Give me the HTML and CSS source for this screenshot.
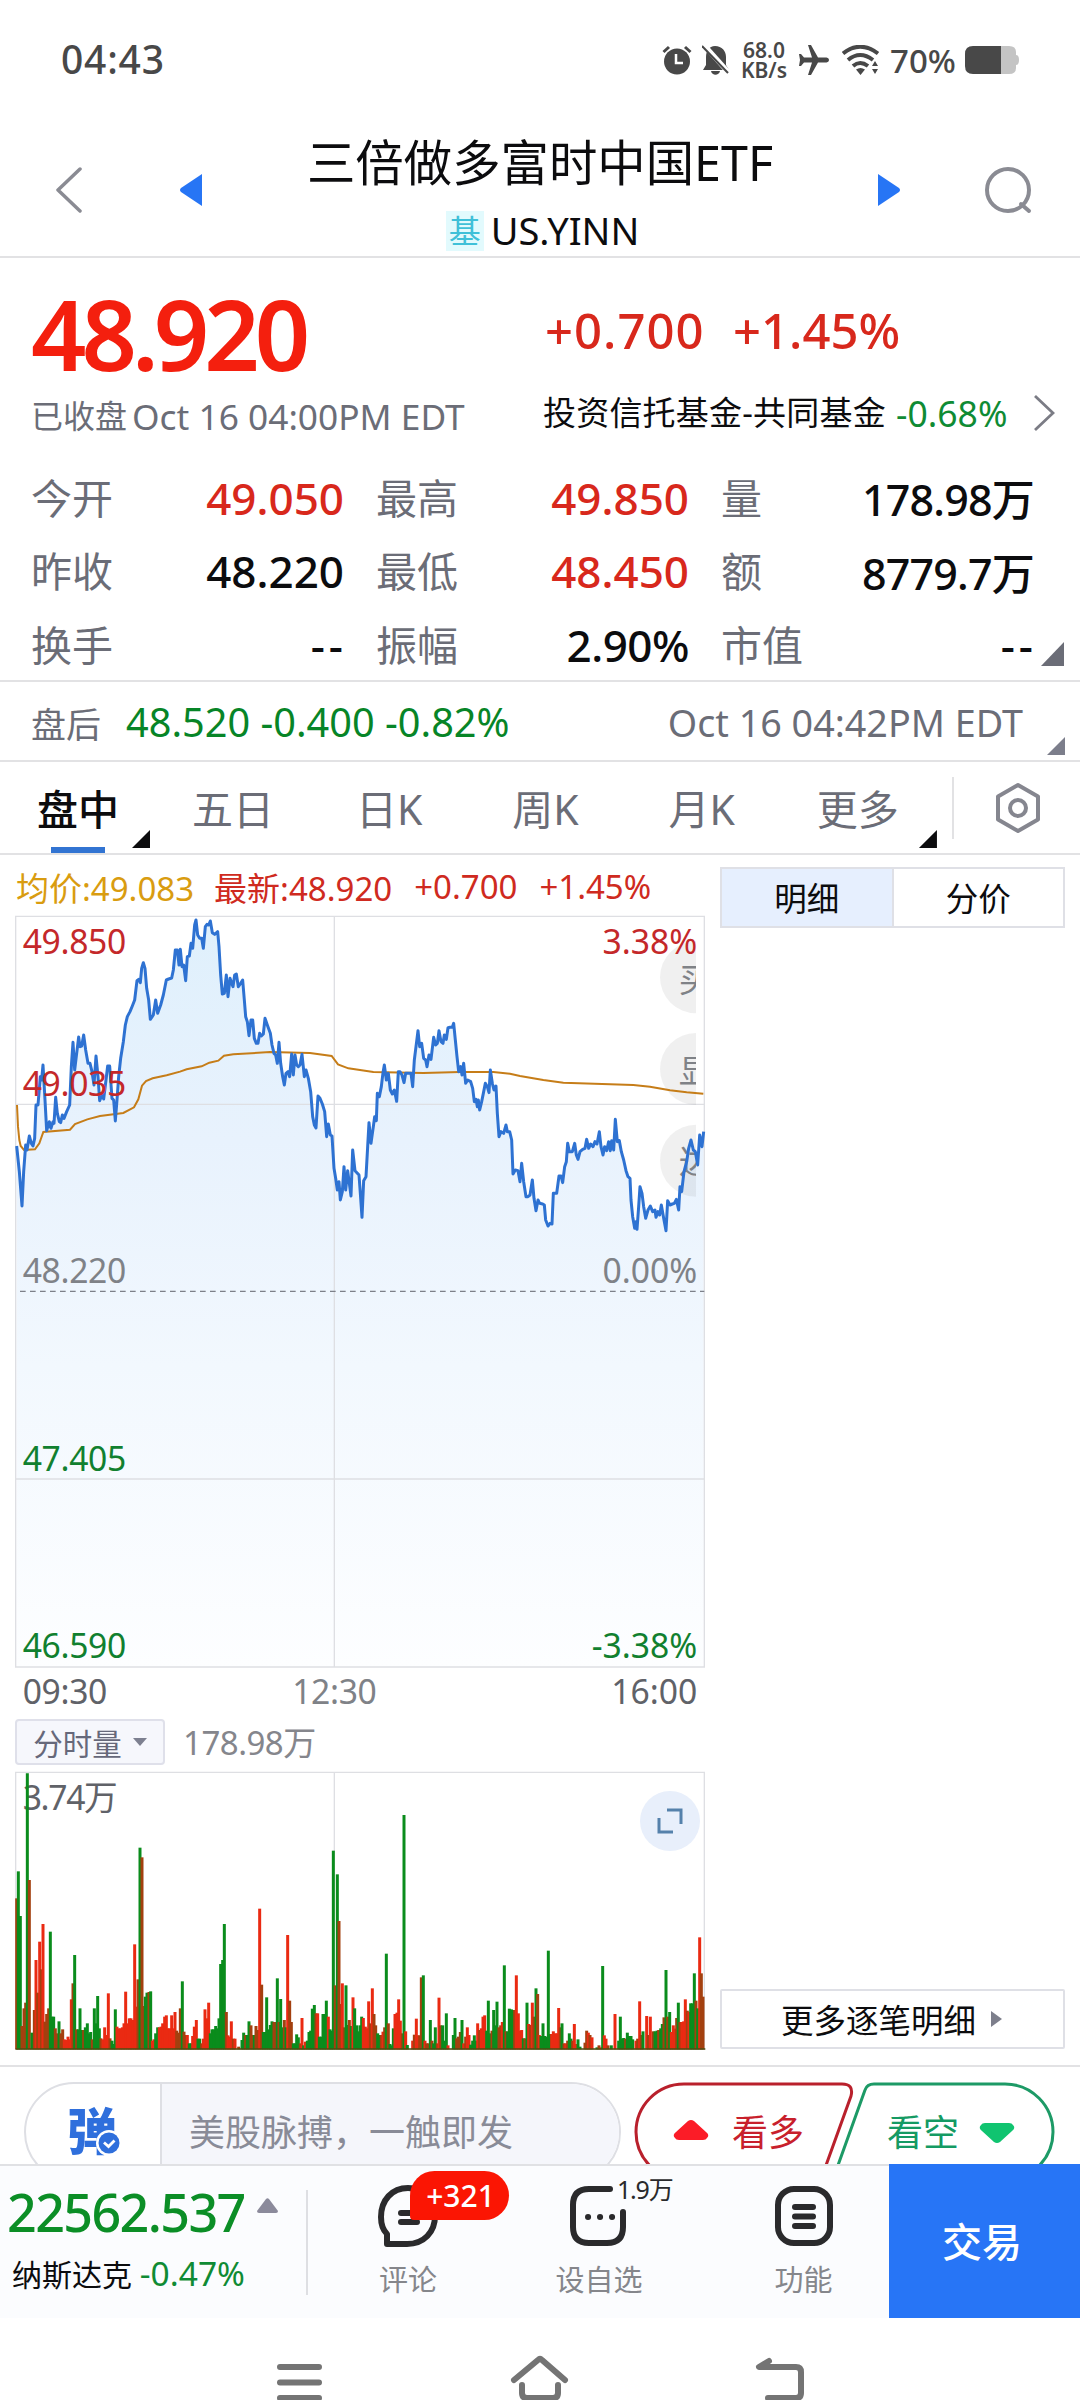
FILE: index.html
```html
<!DOCTYPE html>
<html lang="zh-CN">
<head>
    <meta charset="UTF-8">
    <meta name="viewport" content="width=device-width, initial-scale=1.0">
    <title>三倍做多富时中国ETF</title>
    <link rel="stylesheet" href="styles.css">
</head>
<body>
    <div class="status-bar">
        <span class="clock">04:43</span>
        <svg class="status-icon alarm" width="30" height="30" viewBox="0 0 30 30">
            <circle cx="15" cy="16.500" r="13" fill="#484848"/>
            <path d="M1.500 7L7 2M28.500 7L23 2" stroke="#484848" stroke-width="3" fill="none"/>
            <path d="M14 9v9h7" stroke="#fff" stroke-width="2.500" fill="none"/>
        </svg>
        <svg class="status-icon bell" width="28" height="30" viewBox="0 0 28 30">
            <path d="M13 1c7 0 11 5 11 11v8l3 5H1l3-5v-8C4 6 7 1 13 1zM9 26h9c-1 5-8 5-9 0z" fill="#484848"/>
            <path d="M2 0l25 28" stroke="#fff" stroke-width="5"/>
            <path d="M0 1l26 27" stroke="#484848" stroke-width="2"/>
        </svg>
        <div class="net-speed"><span>68.0</span><span>KB/s</span></div>
        <svg class="status-icon plane" width="30" height="32" viewBox="0 0 30 32">
            <path d="M30 16c0-2-2-2.500-4-2.500h-7L12 1H9l4 12.500H5L2 10H0l1 6-1 6h2l3-3.500h8L9 31h3l7-12.500h7c2 0 4-.5 4-2.500z" fill="#484848"/>
        </svg>
        <svg class="status-icon wifi" width="38" height="30" viewBox="0 0 38 30">
            <g fill="none" stroke="#484848" stroke-width="4">
                <path d="M1 8.500Q18 -5 36 8.500"/>
                <path d="M6 15Q18 5 31 15"/>
                <path d="M11 21Q18 15 26 21"/>
            </g>
            <path d="M14 24.500q4.500-3 9 0L18.500 30zM30 21l3-5 3 5zM30 24l3 5 3-5z" fill="#484848"/>
        </svg>
        <span class="battery-text">70%</span>
        <svg class="status-icon" width="54" height="28" viewBox="0 0 54 28">
            <path d="M36 0h8q7 0 7 6v3q3 0 3 5t-3 5v3q0 6-7 6h-8z" fill="#c4c4c4"/>
            <path d="M8 0h28v28H8q-8 0-8-8V8q0-8 8-8z" fill="#484848"/>
        </svg>
    </div>

    <div class="header">
        <svg class="back" width="26" height="46" viewBox="0 0 26 46"><path d="M24 2L2 23l22 21" fill="none" stroke="#8a8b93" stroke-width="3.500" stroke-linecap="round" stroke-linejoin="round"/></svg>
        <svg class="prev" width="22" height="32" viewBox="0 0 22 32"><path d="M22 0v32L1 18q-2-2 0-4z" fill="#2775f5"/></svg>
        <div class="title-box">
            <h1>三倍做多富时中国ETF</h1>
            <p><span class="fund-tag">基</span>US.YINN</p>
        </div>
        <svg class="next" width="22" height="32" viewBox="0 0 22 32"><path d="M0 0v32l21-14q2-2 0-4z" fill="#2775f5"/></svg>
        <svg class="search" width="48" height="48" viewBox="0 0 48 48"><circle cx="23" cy="24" r="21" fill="none" stroke="#8a8b93" stroke-width="4"/><path d="M36 38l8 7" stroke="#8a8b93" stroke-width="4" stroke-linecap="round"/></svg>
    </div>

    <div class="quote">
        <div class="price-row">
            <span class="price">48.920</span>
            <span class="change net">+0.700</span>
            <span class="change">+1.45%</span>
        </div>
        <div class="info-row">
            <span class="closed">已收盘</span>
            <span class="close-time">Oct 16 04:00PM EDT</span>
            <span class="sector">投资信托基金-共同基金</span>
            <span class="sector-pct">-0.68%</span>
            <svg width="22" height="38" viewBox="0 0 22 38"><path d="M2 2l18 17L2 36" fill="none" stroke="#7b7c85" stroke-width="2.800"/></svg>
        </div>
        <div class="stats">
            <div class="stat"><span>今开</span><b class="up">49.050</b></div>
            <div class="stat"><span>最高</span><b class="up">49.850</b></div>
            <div class="stat"><span>量</span><b class="sum">178.98万</b></div>
            <div class="stat"><span>昨收</span><b>48.220</b></div>
            <div class="stat"><span>最低</span><b class="up">48.450</b></div>
            <div class="stat"><span>额</span><b class="sum">8779.7万</b></div>
            <div class="stat"><span>换手</span><b class="dash">--</b></div>
            <div class="stat"><span>振幅</span><b class="amp">2.90%</b></div>
            <div class="stat"><span>市值</span><b class="dash">--</b></div>
        </div>
        <i class="corner quote-corner"></i>
    </div>

    <div class="after-hours">
        <span class="ah-label">盘后</span>
        <span class="ah-price">48.520 -0.400 -0.82%</span>
        <span class="ah-time">Oct 16 04:42PM EDT</span>
        <i class="corner ah-corner"></i>
    </div>

    <div class="tabs">
        <div class="tab active">盘中<i class="corner tab-corner"></i></div>
        <div class="tab">五日</div>
        <div class="tab">日K</div>
        <div class="tab">周K</div>
        <div class="tab">月K</div>
        <div class="tab more">更多<i class="corner tab-corner"></i></div>
        <div class="settings">
            <svg width="46" height="52" viewBox="0 0 46 52" fill="none" stroke="#85868f" stroke-width="4" stroke-linejoin="round"><path d="M23 3l20 11.500v23L23 49 3 37.500v-23z"/><circle cx="23" cy="26" r="8"/></svg>
        </div>
    </div>

    <div class="main">
        <div class="chart-col">
            <div class="chart-head">
                <span class="avg">均价:49.083</span>
                <span>最新:48.920</span>
                <span>+0.700</span>
                <span>+1.45%</span>
            </div>
            <svg class="price-chart" viewBox="45 45 2073 2400">
                <defs>
                    <linearGradient id="fill" gradientUnits="userSpaceOnUse" x1="0" y1="45" x2="0" y2="2300">
                        <stop offset="0" stop-color="#dff0fc"/>
                        <stop offset="0.300" stop-color="#e8f2fd"/>
                        <stop offset="0.600" stop-color="#f2f8fe"/>
                        <stop offset="1" stop-color="#fdfeff"/>
                    </linearGradient>
                    <clipPath id="sideClip"><rect x="1900" y="100" width="188" height="900"/></clipPath>
                </defs>
                <path id="priceArea" fill="url(#fill)"/>
                <path d="M47 49H2113V2301H47zM1003 49V2301M47 613H2113M47 1737H2113" fill="none" stroke="#dedfe3" stroke-width="4"/>
                <path d="M60 1174H2113" stroke="#7d8089" stroke-width="4" stroke-dasharray="17 13"/>
                <g clip-path="url(#sideClip)">
                    <g fill="#777" fill-opacity="0.110">
                        <circle cx="2088" cy="232" r="108"/>
                        <circle cx="2088" cy="507" r="108"/>
                        <circle cx="2088" cy="782" r="108"/>
                    </g>
                    <g class="side-text">
                        <text x="2036" y="275">买</text>
                        <text x="2036" y="550">显</text>
                        <text x="2036" y="823">达</text>
                    </g>
                </g>
                <path d="M51 615L54 680 58 720 62 738 72 750 105 748 118 730 130 696 210 689 225 672 262 658 300 648 370 639 402 622 415 598 426 557 438 543 458 535 500 526 540 515 560 508 605 499 628 488 655 482 672 467 700 463 810 456 930 459 995 468 1014 493 1045 505 1120 516 1270 519 1380 516 1480 516 1530 521 1560 528 1630 540 1690 548 1900 555 1950 560 2010 571 2060 577 2110 581" fill="none" stroke="#c67d18" stroke-width="6"/>
                <path id="priceLine" fill="none" stroke="#2e72d2" stroke-width="9" stroke-linejoin="round"/>
                <g class="axis">
                    <text x="68" y="162" class="red">49.850</text>
                    <text x="68" y="587" class="red">49.035</text>
                    <text x="68" y="1150">48.220</text>
                    <text x="68" y="1712" class="green">47.405</text>
                    <text x="68" y="2273" class="green">46.590</text>
                    <text x="2092" y="162" class="red end">3.38%</text>
                    <text x="2092" y="1150" class="end">0.00%</text>
                    <text x="2092" y="2273" class="green end">-3.38%</text>
                    <text x="68" y="2413" class="time">09:30</text>
                    <text x="1003" y="2413" class="middle">12:30</text>
                    <text x="2092" y="2413" class="time end">16:00</text>
                </g>
            </svg>
            <div class="volume-head">
                <button class="indicator">分时量<svg width="14" height="8" viewBox="0 0 14 8"><path d="M0 0h14L7 8z" fill="#7d8090"/></svg></button>
                <span>178.98万</span>
            </div>
            <div class="volume-box">
                <svg class="volume-chart" viewBox="45 453 2073 840">
                    <path d="M47 457H2113V1288H47zM1003 457V1288" fill="none" stroke="#dedfe3" stroke-width="4"/>
                    <text x="68" y="571">3.74万</text>
                    <g id="bars" stroke-width="9"></g>
                    <path d="M47 1287H2116" stroke="#4d4c10" stroke-width="4"/>
                </svg>
                <span class="expand">
                    <svg width="26" height="26" viewBox="0 0 26 26"><path d="M10 2h14v14M2 10v14h14" fill="none" stroke="#5581ab" stroke-width="3"/></svg>
                </span>
            </div>
        </div>
        <div class="detail-col">
            <div class="switch"><span class="on">明细</span><span>分价</span></div>
            <div class="more-detail">更多逐笔明细<svg width="11" height="16" viewBox="0 0 11 16"><path d="M0 0l11 8-11 8z" fill="#7d7f8c"/></svg></div>
        </div>
    </div>

    <div class="promo">
        <div class="pulse">
            <div class="pulse-logo"><span>弹</span>
                <svg width="26" height="26" viewBox="0 0 26 26"><circle cx="13" cy="13" r="13" fill="#fff"/><circle cx="13" cy="13" r="10.500" fill="#2f6fdc"/><path d="M8 12.500l4.500 4 6-6" fill="none" stroke="#fff" stroke-width="2.800"/></svg>
            </div>
            <div class="pulse-text">美股脉搏，一触即发</div>
        </div>
        <svg class="vote" width="422" height="82" viewBox="0 0 422 82">
            <path d="M186 100L217 14Q220 2 208 2H50C23 2 2 24 2 50S23 98 50 98" fill="#fff" stroke="#b9202c" stroke-width="3"/>
            <path d="M198 100L231 8Q233 2 240 2H371C398 2 419 24 419 50S398 98 371 98" fill="#fff" stroke="#1d9a66" stroke-width="3"/>
            <path d="M41 56q-3-3 1-6l12-11q3-2 6 0l12 11q4 3 1 6-1 2-4 2H45q-3 0-4-2z" fill="#fb1c27"/>
            <path d="M347 43q-3 3 1 6l12 11q3 2 6 0l12-11q4-3 1-6-1-2-4-2h-24q-3 0-4 2z" fill="#10c470"/>
            <text x="98" y="64" fill="#c8202c">看多</text>
            <text x="253" y="64" fill="#159a63">看空</text>
        </svg>
    </div>

    <div class="bottom-bar">
        <div class="index">
            <div class="index-value">22562.537<svg width="21" height="15" viewBox="0 0 21 15"><path d="M9 1q1.500-1.500 3 0l9 12q0 2-2 2H2q-2 0-2-2z" fill="#8b8a9b"/></svg></div>
            <div class="index-name">纳斯达克 <span>-0.47%</span></div>
        </div>
        <div class="action comment">
            <svg width="60" height="64" viewBox="0 0 60 64" fill="none" stroke="#2a2a2c" stroke-width="6" stroke-linecap="round" stroke-linejoin="round"><path d="M9 60V50C5 46 3 40 3 33 3 16 14 4 30 4s27 12 27 28-11 28-28 28z"/><path d="M23 29h16M23 38h16"/></svg>
            <span>评论</span>
            <em class="badge">+321</em>
        </div>
        <div class="action watch">
            <svg width="60" height="64" viewBox="0 0 60 64" fill="none" stroke="#2a2a2c" stroke-width="6" stroke-linecap="round"><path d="M41 5H20Q4 5 4 21v22q0 16 16 16h18q16 0 16-16V28"/><path d="M19 33h.1M31 33h.1M43 33h.1"/></svg>
            <span>设自选</span>
            <em class="count">1.9万</em>
        </div>
        <div class="action func">
            <svg width="60" height="64" viewBox="0 0 60 64" fill="none" stroke="#2a2a2c" stroke-width="6" stroke-linecap="round"><rect x="4" y="5" width="52" height="54" rx="16"/><path d="M21 23h18M21 32.500h18M21 42h18"/></svg>
            <span>功能</span>
        </div>
        <div class="trade">交易</div>
    </div>

    <div class="nav-bar">
        <svg width="540" height="48" viewBox="0 0 540 48" fill="none" stroke="#747474" stroke-width="6" stroke-linecap="round" stroke-linejoin="round">
            <path d="M10 14h39M10 29.500h39M10 45h39"/>
            <path d="M244 27l24-20q2-2 4 0L295 27M252 32v8q0 5 5 5h26q5 0 5-5v-8"/>
            <path d="M499 8l-10 6h37q5 0 5 5v21q0 5-5 5h-28"/>
        </svg>
    </div>

    <script src="chart.js"></script>
</body>
</html>
```

FILE: styles.css
```css
* {
    box-sizing: border-box;
}
body {
    margin: 0;
    width: 1080px;
    height: 2400px;
    overflow: hidden;
    background: #fff;
    color: #0c0c0e;
    font-family: "Noto Sans", "Noto Sans CJK SC", sans-serif;
    white-space: nowrap;
}
svg {
    display: block;
    flex: none;
}
i, em {
    font-style: normal;
}

/* status bar */
.status-bar {
    height: 120px;
    padding: 0 61px 0 61px;
    display: flex;
    align-items: center;
    color: #484848;
}
.clock {
    font-size: 39px;
    font-weight: 500;
    letter-spacing: 0.8px;
    margin: -3px auto 0 0;
}
.alarm {
    margin-right: 1px;
}
.bell {
    margin-left: 9px;
}
.net-speed {
    width: 50px;
    margin-left: 9px;
    display: flex;
    flex-direction: column;
    align-items: center;
    font-size: 21px;
    line-height: 20px;
    font-weight: 600;
}
.plane {
    margin-left: 10px;
}
.wifi {
    margin-left: 13px;
}
.battery-text {
    font-size: 33px;
    font-weight: 500;
    width: 67px;
    margin: 1px 8px 0 10px;
}

/* header */
.header {
    height: 138px;
    padding: 0 47px 0 56px;
    display: flex;
    align-items: center;
    border-bottom: 2px solid #e2e2e4;
}
.header > svg {
    margin-top: 3px;
}
.prev {
    margin-left: 98px;
}
.title-box {
    flex: 1;
    padding-top: 8px;
    text-align: center;
}
.title-box h1 {
    margin: 5px 0 0;
    font-size: 48.400px;
    line-height: 70px;
    font-weight: 400;
}
.title-box p {
    margin: 0 0 0 5px;
    display: flex;
    justify-content: center;
    align-items: center;
    font-size: 38px;
    line-height: 66px;
}
.fund-tag {
    margin: 2px 7px 0 0;
    padding: 0 3px;
    font-size: 32px;
    line-height: 40px;
    color: #3fc0d8;
    background: #e2fafd;
}
.next {
    margin-right: 85px;
}

/* quote */
.quote {
    position: relative;
    height: 424px;
    padding: 26px 0 0 31px;
    border-bottom: 2px solid #e2e2e4;
}
.price-row {
    display: flex;
    align-items: center;
    height: 98px;
}
.price {
    width: 514px;
    font-size: 97px;
    line-height: 98px;
    font-weight: 600;
    letter-spacing: -5px;
    color: #f41f0e;
}
.change {
    width: 188px;
    font-size: 49px;
    line-height: 60px;
    font-weight: 500;
    color: #d8281c;
    margin-top: -6px;
}
.change.net {
    letter-spacing: 1px;
}
.info-row {
    display: flex;
    align-items: center;
    height: 64px;
    font-size: 33px;
    line-height: 40px;
}
.closed {
    font-size: 32px;
    color: #6b6d77;
    margin-top: 4px;
}
.close-time {
    width: 411px;
    margin-left: 5px;
    margin-top: 3px;
    font-size: 35.300px;
    color: #6b6d77;
}
.info-row svg {
    margin: -3px 0 0 18px;
}
.sector {
    width: 353px;
    letter-spacing: 0.200px;
    margin-top: -2px;
}
.sector-pct {
    width: 119px;
    margin-top: -2px;
    font-size: 35.500px;
    color: #0f8b34;
}
.stats {
    margin-top: 15px;
    width: 1002px;
    display: grid;
    grid-template-columns: 313px 313px 313px;
    column-gap: 32px;
    grid-auto-rows: 73.500px;
}
.stat {
    display: flex;
    justify-content: space-between;
    align-items: center;
    font-size: 41px;
    color: #6b6d77;
}
.stat span {
    margin-top: -4px;
}
.stat b {
    font-size: 44px;
    font-weight: 500;
    color: #0c0c0e;
}
.stat b.up {
    color: #d8281c;
}
.stat b.sum {
    font-size: 43px;
    letter-spacing: -0.800px;
}
.stat b.amp {
    letter-spacing: -0.500px;
}
.stat b.dash {
    letter-spacing: 4px;
    margin-right: -3px;
}
.corner {
    position: absolute;
    width: 18px;
    height: 18px;
    background: #7c7e8b;
    clip-path: polygon(100% 0, 100% 100%, 0 100%);
}
.quote-corner {
    right: 16px;
    bottom: 14px;
    width: 23px;
    height: 24px;
    background: #6b6d77;
}

/* after hours */
.after-hours {
    position: relative;
    height: 80px;
    padding: 2px 57px 0 31px;
    display: flex;
    align-items: center;
    font-size: 37.700px;
    border-bottom: 2px solid #e2e2e4;
    color: #6b6d77;
}
.ah-label {
    font-size: 35px;
}
.ah-price {
    margin-left: 25px;
    font-size: 39.700px;
    color: #078527;
}
.ah-time {
    margin-left: auto;
}
.ah-corner {
    right: 15px;
    bottom: 5px;
}

/* chart tabs */
.tabs {
    height: 93px;
    display: flex;
    align-items: center;
    border-bottom: 2px solid #e2e2e4;
}
.tab {
    position: relative;
    width: 156.200px;
    height: 91px;
    line-height: 95px;
    font-size: 41px;
    text-align: center;
    color: #6b6d77;
}
.tab:first-child {
    width: 155px;
    text-align: left;
    padding-left: 37px;
}
.tab.active {
    color: #0c0c0e;
    font-weight: 500;
}
.tab.active::after {
    content: "";
    position: absolute;
    left: 51px;
    bottom: 0;
    width: 54px;
    height: 6px;
    background: #3274d2;
}
.tab-corner {
    right: 5px;
    bottom: 5px;
    background: #0c0c0e;
}
.more .tab-corner {
    right: -1px;
}
.settings {
    margin-left: auto;
    width: 128px;
    height: 62px;
    padding-left: 41px;
    display: flex;
    align-items: center;
    border-left: 2px solid #e2e2e4;
}

/* charts */
.main {
    height: 1212px;
    padding: 0 15px;
    display: flex;
    justify-content: space-between;
    border-bottom: 2px solid #e2e2e4;
}
.chart-col {
    width: 691px;
}
.chart-head {
    height: 60px;
    padding: 3px 0 0 1px;
    display: flex;
    align-items: center;
    gap: 22px;
    font-size: 33px;
    color: #cf2a20;
}
.chart-head .avg {
    color: #d99c10;
    margin-right: -2px;
}
.price-chart {
    width: 691px;
    height: 800px;
}
.axis text,
.volume-chart text {
    font-size: 101px;
    fill: #7f8287;
    letter-spacing: -1px;
}
.axis .red {
    fill: #c4282a;
}
.axis .green {
    fill: #11802f;
}
.axis .time,
.volume-chart text {
    fill: #606268;
}
.axis .end {
    text-anchor: end;
    letter-spacing: 0;
}
.axis .middle {
    text-anchor: middle;
}
.volume-chart text {
    letter-spacing: -4px;
}
.side-text {
    font-size: 100px;
    fill: #7f8287;
}
.volume-head {
    height: 56px;
    display: flex;
    align-items: center;
    font-size: 33px;
    line-height: 46px;
    color: #85868c;
}
.volume-head span {
    letter-spacing: -0.500px;
}
.indicator {
    width: 150px;
    height: 46px;
    margin: -2px 18px 0 0;
    padding: 0;
    display: flex;
    align-items: center;
    justify-content: center;
    gap: 11px;
    font-family: inherit;
    font-size: 29.500px;
    color: #66687a;
    background: #f6f7fc;
    border: 2px solid #dfe0ea;
    border-radius: 4px;
}
.volume-box {
    position: relative;
}
.volume-chart {
    width: 691px;
    height: 280px;
}
.expand {
    position: absolute;
    right: 6px;
    top: 20px;
    width: 60px;
    height: 60px;
    border-radius: 50%;
    background: #e8effb;
    display: flex;
    align-items: center;
    justify-content: center;
}
.detail-col {
    width: 345px;
    padding: 12px 0 16px;
    display: flex;
    flex-direction: column;
    justify-content: space-between;
    font-size: 32.500px;
}
.switch {
    height: 61px;
    display: flex;
    border: 2px solid #dfe0e6;
}
.switch span {
    flex: 1;
    line-height: 60px;
    text-align: center;
}
.switch .on {
    background: #e6effe;
    border-right: 2px solid #dfe0e6;
}
.more-detail {
    height: 60px;
    padding-right: 2px;
    display: flex;
    align-items: center;
    justify-content: center;
    gap: 15px;
    border: 2px solid #dfe0e6;
    border-radius: 2px;
}

/* promo strip, cut off by the bottom bar */
.promo {
    height: 97px;
    padding: 15px 24px 0;
    display: flex;
    justify-content: space-between;
    align-items: flex-start;
    overflow: hidden;
}
.pulse {
    width: 597px;
    height: 100px;
    display: flex;
    border: 2px solid #dedfe4;
    border-radius: 50px;
    overflow: hidden;
}
.pulse-logo {
    position: relative;
    width: 138px;
    border-right: 2px solid #dedfe4;
    text-align: center;
    line-height: 94px;
    font-size: 50px;
    font-weight: 900;
    color: #2f6fdc;
    margin-left: -2px;
}
.pulse-logo svg {
    position: absolute;
    left: 72px;
    top: 46px;
}
.pulse-text {
    flex: 1;
    padding-left: 27px;
    line-height: 98px;
    font-size: 36px;
    color: #898b97;
    background: #f5f6fb;
}
.vote {
    margin: 0 0 0 -2px;
}
.vote text {
    font-size: 36px;
}

/* bottom bar */
.bottom-bar {
    height: 154px;
    display: flex;
    background: #fbfcfe;
    border-top: 2px solid #e0e1e4;
}
.index {
    width: 308px;
    padding: 12px 0 0 7px;
    background: linear-gradient(#dedfe3, #dedfe3) right 24px / 2px 105px no-repeat;
}
.index-value {
    display: flex;
    align-items: center;
    font-size: 52px;
    line-height: 68px;
    font-weight: 500;
    letter-spacing: -1.600px;
    color: #0b8e26;
}
.index-value svg {
    margin: -14px 0 0 12px;
}
.index-name {
    padding-left: 5px;
    font-size: 30px;
    line-height: 54px;
}
.index-name span {
    color: #0f8b34;
    font-size: 33.500px;
}
.action {
    position: relative;
    display: flex;
    flex-direction: column;
    align-items: center;
    padding-top: 18px;
    font-size: 29px;
    line-height: 64px;
    color: #85868b;
}
.comment {
    width: 200px;
}
.watch {
    width: 182px;
}
.func {
    flex: 1;
    padding-left: 28px;
}
.badge {
    position: absolute;
    left: 102px;
    top: 5px;
    width: 99px;
    height: 49px;
    padding-left: 2px;
    border-radius: 25px 25px 25px 4px;
    background: #fb1503;
    color: #fff;
    font-size: 30px;
    font-weight: 500;
    line-height: 50px;
    text-align: center;
}
.count {
    position: absolute;
    left: 109px;
    top: 6px;
    font-size: 25px;
    line-height: 34px;
    letter-spacing: -1.200px;
    color: #2a2a2c;
}
.trade {
    width: 191px;
    margin-top: -2px;
    padding: 2px 5px 0 0;
    line-height: 152px;
    font-size: 40px;
    font-weight: 500;
    text-align: center;
    color: #fff;
    background: #2775f6;
}

.nav-bar {
    height: 83px;
    padding: 35px 0 0 270px;
}
```

FILE: chart.js
```js
// intraday price, x y pairs
const price = `50 738 58 815 66 918 71 815 77 735 81 750 88 708 94 730 99 738 104 715 108 615 114 615 121 530 125 540 129 495
 135 600 140 692 148 665 153 685 159 665 162 670 167 592 172 640 178 665 182 668 187 645 192 655 200 635 209 615 214 500 219 427
 224 510 230 460 236 411 240 440 245 438 251 405 257 450 264 490 270 490 276 515 282 555 288 468 294 530 299 602 306 585 311 597
 318 540 323 498 329 498 336 595 341 600 346 663 351 600 356 530 362 475 370 425 376 375 382 350 390 335 397 318 404 300 411 242
 416 238 421 248 425 205 430 188 435 205 440 265 446 300 451 358 460 345 467 300 473 340 482 315 490 285 499 240 506 237 515 234
 520 210 526 150 532 150 537 195 541 148 546 200 551 195 557 242 562 170 568 168 573 130 578 145 584 75 588 60 593 105 599 115
 605 115 610 145 616 80 621 73 626 75 631 63 637 98 644 103 653 95 657 140 662 225 667 282 673 280 679 225 684 290 690 235 695 250
 699 260 704 225 709 222 715 260 722 250 728 240 733 300 737 350 742 365 747 407 753 360 758 360 763 415 769 430 774 430 779 400
 784 408 790 402 795 355 803 378 811 400 816 435 822 460 827 465 832 490 837 427 842 490 848 530 853 555 858 520 864 515 869 530
 875 462 880 525 885 465 890 495 895 500 900 495 906 463 913 530 918 510 925 535 932 575 938 650 943 675 948 684 954 588 960 595
 967 612 974 635 980 710 985 672 991 705 996 708 1002 805 1007 835 1012 870 1017 845 1021 900 1027 875 1032 800 1037 870 1043 812
 1048 850 1053 888 1058 750 1065 812 1077 825 1081 880 1086 952 1091 842 1098 830 1103 740 1107 668 1113 730 1120 680 1124 650 1129 662
 1132 580 1138 590 1144 560 1149 518 1153 495 1159 540 1165 520 1171 570 1177 582 1183 570 1190 604 1195 515 1200 515 1206 525 1212 548
 1217 520 1230 520 1233 520 1238 560 1243 480 1248 440 1254 392 1259 440 1265 430 1271 475 1277 480 1281 500 1287 465 1293 478 1301 412
 1307 435 1312 430 1317 392 1323 425 1329 430 1333 405 1339 418 1344 383 1350 382 1357 382 1361 370 1366 420 1371 470 1376 515
 1382 500 1386 525 1391 490 1397 550 1403 540 1412 545 1418 565 1423 605 1428 598 1432 620 1435 600 1439 630 1445 605 1450 580
 1456 550 1462 560 1467 578 1471 510 1477 550 1482 570 1488 558 1492 640 1497 710 1503 695 1511 700 1518 675 1522 695 1529 695
 1535 720 1539 822 1546 810 1554 812 1560 845 1565 790 1571 845 1578 890 1584 890 1590 885 1597 840 1602 895 1608 932 1614 900
 1619 910 1628 912 1633 915 1637 960 1644 978 1650 970 1656 972 1660 880 1670 880 1677 828 1683 828 1688 848 1694 800 1699 785
 1703 730 1708 755 1717 755 1724 730 1729 765 1734 778 1740 755 1748 748 1755 745 1760 718 1766 745 1772 732 1779 740 1785 725
 1791 732 1798 695 1803 740 1809 765 1814 740 1820 752 1826 725 1831 752 1835 722 1841 750 1846 658 1852 725 1858 722 1864 755
 1871 780 1878 812 1884 830 1890 835 1893 900 1898 950 1904 985 1908 965 1911 988 1916 920 1920 860 1926 880 1931 920 1937 955
 1944 930 1951 918 1958 935 1965 930 1968 952 1974 935 1979 945 1984 915 1992 960 1998 992 2003 902 2010 915 2017 912 2023 910
 2029 898 2036 930 2040 860 2045 875 2052 815 2060 785 2066 745 2073 720 2080 750 2086 755 2093 795 2099 705 2106 740 2111 695`.trim().split(/\s+/);

let line = "";
for (let i = 0; i < price.length; i += 2) {
    line += (i ? "L" : "M") + price[i] + " " + price[i + 1];
}
document.getElementById("priceLine").setAttribute("d", line);
document.getElementById("priceArea").setAttribute("d", line + "V2300H50Z");

// minute volume: x, colour (r up, g down, m mixed), top
const volume = `50m835 55g754 61g888 66m1218 72m1165 77m1148 82g460 88m780 96g1238 103m1170 108r1020 113m1118 119r965 124m1048 129r912
 135m1205 140m1182 146m1165 151g935 156g1190 161g1190 166m1225 172m1240 177g1204 183m1240 188m1228 193r1258 198r1260 204r1250 209r1258
 214r1138 219m1090 224g1005 230m1228 235g1228 240g1165 246g1230 251m1230 256g1222 262g1210 267g1240 272g1236 277m1258 283g1165 288g1210
 293g1128 298g1225 303m1255 309r1258 314r1222 319r1245 325r1120 330m1255 336g1262 341g1272 346g1168 351r1220 357r1225 362r1225 367r1222
 372r1210 377r1115 383r1210 388r1195 393r1195 398r1200 404r973 409r1160 414m1078 420g683 426m712 431m1158 436g1130 441g1118 447m1116
 452g1114 457r1262 462r1258 467g1240 473g1222 478r1222 483r1220 488r1210 494r1190 499r1186 504r1225 509r1225 515r1186 520r1225
 525r1176 530m1232 536m1238 541m1165 547g1084 552m1235 557m1245 562r1245 568g1270 573g1270 578r1248 583r1220 589r1200 594g1256 599g1256
 605m1270 610r1256 615r1168 620r1195 626r1148 631g1240 636g1228 641g1228 647g1218 652g1225 657g1195 662g1032 668g1020 673g912 679m1176
 684r1246 689r1250 694r1204 700m1256 705r1256 716m1280 726g1260 731g1238 737m1245 742g1245 747g1204 753m1216 758m1245 763g1245 768m1218
 774m1230 779r866 785m1094 790g1236 795g1236 800g1132 806g1228 811g1215 816g1204 822m1206 827m1206 832g1075 837m1206 842g1137 848g1222
 853m1200 858g1222 863r945 869m1142 874m1206 880g1270 885g1270 890g1243 895g1252 901m1270 906r1194 911g1276 916r1265 922g1262 927g1236
 932g1232 937g1166 943g1155 948m1180 953r1180 958g1250 964g1250 969g1182 974g1182 979g1142 985r1190 990g1228 995g1232 1000g692 1006m1096
 1012g763 1017m903 1022m1152 1027r1090 1033m1222 1038g1096 1043g1215 1048m1200 1054g1218 1059r1132 1064g1165 1070g1216 1075g1234 1080g1216
 1085g1190 1090r1194 1096r1220 1101r1225 1106r1144 1111m1210 1117r1105 1122m1182 1127m1216 1133g1240 1138g1245 1144m1245 1149r1235
 1154m1222 1159g1001 1165m1210 1170g1272 1175g1276 1180g1225 1185r1182 1191r1178 1196r1138 1201r1202 1207m1240 1212g585 1217r1234
 1222g1275 1238r1262 1243m1244 1249r1196 1254r1246 1259m1246 1264m1072 1270g1066 1275r1262 1280m1270 1285m1270 1291g1200 1296m1262
 1301g1270 1306g1222 1312m1270 1317r1133 1322m1216 1328g1216 1333g1262 1339g1180 1344r1276 1360g1245 1365g1194 1370m1255 1375m1250
 1381m1236 1386g1200 1391r1270 1397m1250 1402r1222 1407r1245 1412g1274 1418g1262 1423g1246 1428g1262 1433r1210 1439m1230 1444r1225
 1449r1190 1454r1186 1460g1232 1465g1142 1471g1240 1476m1232 1481g1170 1486g1216 1491g1145 1497m1222 1502m1216 1507r1206 1513g1036
 1518m1234 1523g1234 1528g1166 1534g1168 1539g1170 1544m1170 1549r1066 1555r1180 1560r1232 1565r1230 1570g1255 1575m1255 1581g1148
 1586r1212 1591m1215 1597r1148 1602m1190 1608g1105 1613m1122 1618r1245 1623g1248 1629g1210 1634g1248 1639g1250 1645g992 1650g1242
 1655r1242 1660r1234 1666r1240 1671r1240 1676r1164 1681m1222 1686g1210 1692m1270 1697r1270 1703m1262 1708g1240 1713g1256 1718m1262
 1723r1212 1729r1272 1734g1258 1740g1280 1755m1268 1760m1232 1765r1238 1770m1245 1776r1252 1791g1282 1797m1276 1803r1282 1808g1038
 1813r1246 1818r1256 1824m1276 1834g1276 1845r1182 1861g1190 1856g1262 1866g1256 1871g1254 1877m1256 1882g1238 1887g1248 1893g1248
 1898g1258 1908r1262 1913m1256 1919r1144 1924m1245 1929g1234 1940r1188 1945m1245 1951r1190 1960m1234 1965g1234 1971g1232 1976m1230
 1982g1225 1987g1212 1992m1192 1998g1050 2003m1190 2009g1176 2014r1236 2020r1216 2025r1226 2030m1194 2035g1148 2040m1206 2046r1206
 2051r1204 2056r1138 2062m1172 2067r1176 2072g1150 2077g1150 2083g1060 2088m1142 2093g1165 2099r952 2104m1060 2109m1130`.trim().split(/\s+/);

const colors = { r: "#ea2a12", g: "#0a8c1c", m: "#a3400f" };
const bars = document.getElementById("bars");
volume.forEach(v => {
    const p = v.match(/(\d+)([rgm])(\d+)/);
    const bar = document.createElementNS("http://www.w3.org/2000/svg", "path");
    bar.setAttribute("d", `M${p[1]} ${p[3]}V1288`);
    bar.setAttribute("stroke", colors[p[2]]);
    bars.appendChild(bar);
});
```
